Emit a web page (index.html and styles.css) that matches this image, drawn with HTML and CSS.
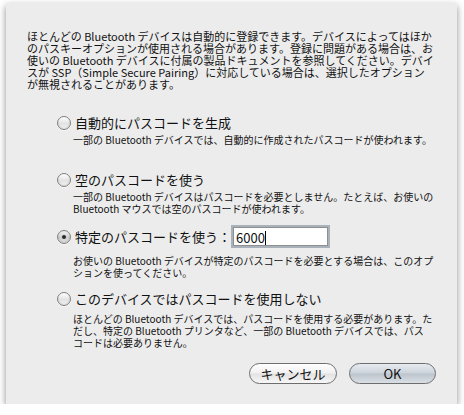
FILE: index.html
```html
<!DOCTYPE html>
<html lang="ja">

<head>
  <meta charset="utf-8">
  <title>パスコードオプション</title>
  <link rel="stylesheet" href="styles.css">
</head>

<body>
  <div class="sheet">
    <p class="intro">
      ほとんどの Bluetooth デバイスは自動的に登録できます。デバイスによってはほか<br>
      のパスキーオプションが使用される場合があります。登録に問題がある場合は、お<br>
      使いの Bluetooth デバイスに付属の製品ドキュメントを参照してください。デバイ<br>
      スが SSP（Simple Secure Pairing）に対応している場合は、選択したオプション<br>
      が無視されることがあります。
    </p>

    <div class="options">
      <div class="option opt-auto">
        <label class="choice"><span class="radio"></span>自動的にパスコードを生成</label>
        <p class="desc">一部の Bluetooth デバイスでは、自動的に作成されたパスコードが使われます。</p>
      </div>

      <div class="option opt-empty">
        <label class="choice"><span class="radio"></span>空のパスコードを使う</label>
        <p class="desc">
          一部の Bluetooth デバイスはパスコードを必要としません。たとえば、お使いの<br>
          Bluetooth マウスでは空のパスコードが使われます。
        </p>
      </div>

      <div class="option opt-fixed">
        <div class="choice field-row">
          <label class="choice"><span class="radio checked"></span>特定のパスコードを使う：</label>
          <div class="field">6000<span class="caret"></span></div>
        </div>
        <p class="desc loose">
          お使いの Bluetooth デバイスが特定のパスコードを必要とする場合は、このオプ<br>
          ションを使ってください。
        </p>
      </div>

      <div class="option opt-none">
        <label class="choice"><span class="radio"></span>このデバイスではパスコードを使用しない</label>
        <p class="desc loose">
          ほとんどの Bluetooth デバイスでは、パスコードを使用する必要があります。た<br>
          だし、特定の Bluetooth プリンタなど、一部の Bluetooth デバイスでは、パス<br>
          コードは必要ありません。
        </p>
      </div>
    </div>

    <div class="buttons">
      <button type="button" class="btn">キャンセル</button>
      <button type="button" class="btn default">OK</button>
    </div>
  </div>
</body>

</html>
```

FILE: styles.css
```css
body {
  margin: 0;
  background: #fff;
  font-family: "Noto Sans CJK JP", sans-serif;
  color: #111;
}

p {
  margin: 0;
}

.sheet {
  box-sizing: border-box;
  width: 451px;
  height: 401px;
  margin: 3px 0 0 6px;
  padding: 27px 21px 0 21px;
  background: #ececec;
  box-shadow: 0 3px 7px rgba(0, 0, 0, 0.45);
  display: flex;
  flex-direction: column;
}

.intro {
  font-size: 11px;
  line-height: 12px;
  white-space: nowrap;
}

.options {
  margin-left: 30px;
  display: flex;
  flex-direction: column;
}

.choice {
  display: flex;
  align-items: center;
  gap: 4px;
  font-size: 13px;
  line-height: 16px;
}

.radio {
  box-sizing: border-box;
  width: 14px;
  height: 14px;
  border-radius: 50%;
  border: 1px solid #7f7f7f;
  background: linear-gradient(#ffffff, #e2e2e2 55%, #f6f6f6);
  box-shadow: inset 0 -1px 2px rgba(0, 0, 0, 0.12), 0 1px 0 rgba(255, 255, 255, 0.6);
  display: flex;
  align-items: center;
  justify-content: center;
  flex: none;
}

.radio.checked {
  background: linear-gradient(#f0f0f0, #cfcfcf 55%, #e4e4e4);
}

.radio.checked::after {
  content: "";
  width: 4px;
  height: 4px;
  border-radius: 50%;
  background: #2a2a2a;
}

.desc {
  margin: 3px 0 0 16px;
  font-size: 10px;
  line-height: 12px;
  white-space: nowrap;
}

.desc.loose {
  margin-top: 7px;
}

.opt-auto {
  margin-top: 25px;
}

.opt-empty {
  margin-top: 26px;
}

.opt-fixed {
  margin-top: 10px;
}

.opt-none {
  margin-top: 12px;
}

.opt-none .desc {
  margin-top: 6px;
}

.field-row {
  height: 23px;
  gap: 2px;
}

.field {
  box-sizing: border-box;
  width: 95px;
  height: 19px;
  padding: 2px 3px 0 2px;
  background: #fff;
  border: 1px solid #8f8f8f;
  box-shadow: 0 0 0 2px #a9b1bb;
  font-size: 13px;
  line-height: 15px;
  display: flex;
  align-items: center;
}

.caret {
  width: 1px;
  height: 14px;
  background: #000;
}

.buttons {
  margin-top: 14px;
  display: flex;
  justify-content: flex-end;
  gap: 12px;
}

.btn {
  box-sizing: border-box;
  width: 88px;
  height: 21px;
  padding: 0;
  border: 1px solid #6e6e6e;
  border-radius: 11px;
  background: linear-gradient(#ffffff, #f0f0f0 48%, #e2e2e2 52%, #f7f7f7);
  font-family: "Noto Sans CJK JP", sans-serif;
  font-size: 13px;
  line-height: 19px;
  color: #111;
  cursor: pointer;
}

.btn.default {
  width: 87px;
  background: linear-gradient(#e6ebf0, #ccd3da 48%, #bcc4cc 52%, #d9dfe5);
}
```
